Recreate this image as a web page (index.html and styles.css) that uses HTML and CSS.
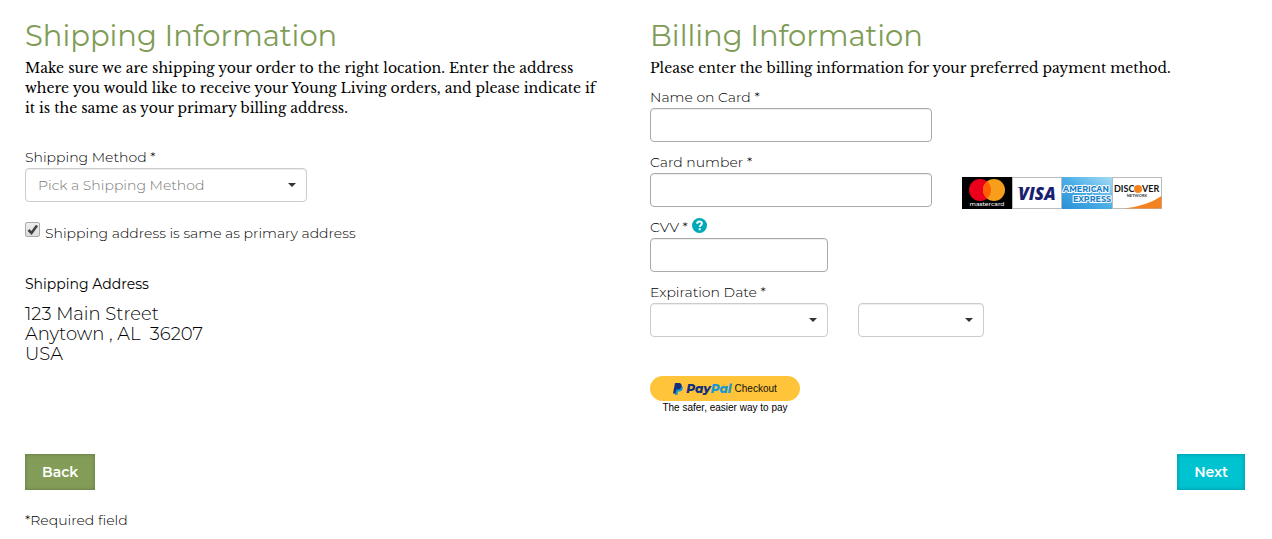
FILE: index.html
```html
<!DOCTYPE html>
<html lang="en">
<head>
    <meta charset="UTF-8">
    <meta name="viewport" content="width=device-width, initial-scale=1.0">
    <title>Shipping and Billing</title>
    <link rel="stylesheet" href="styles.css">
</head>
<body>
    <form class="checkout">
        <div class="columns">
            <section>
                <h1>Shipping Information</h1>
                <p class="intro">Make sure we are shipping your order to the right location. Enter the address where you would like to receive your Young Living orders, and please indicate if it is the same as your primary billing address.</p>

                <div class="field method">
                    <label for="shipping-method">Shipping Method *</label>
                    <select id="shipping-method" class="wide">
                        <option>Pick a Shipping Method</option>
                    </select>
                </div>

                <div class="same">
                    <input type="checkbox" id="same-address" checked>
                    <label for="same-address">Shipping address is same as primary address</label>
                </div>

                <h2>Shipping Address</h2>
                <address>
                    123 Main Street<br>
                    Anytown , AL &nbsp;36207<br>
                    USA
                </address>
            </section>

            <section>
                <h1>Billing Information</h1>
                <p class="intro">Please enter the billing information for your preferred payment method.</p>

                <div class="field">
                    <label for="card-name">Name on Card *</label>
                    <input type="text" id="card-name" class="wide">
                </div>

                <div class="field">
                    <label for="card-number">Card number *</label>
                    <div class="row">
                        <input type="text" id="card-number" class="wide">
                        <div class="cards">
                            <svg viewBox="0 0 50 32" role="img" aria-label="Mastercard">
                                <rect width="50" height="32" fill="#000"/>
                                <circle cx="18" cy="13" r="11" fill="#eb001b"/>
                                <circle cx="32" cy="13" r="11" fill="#f79e1b"/>
                                <path d="M25 4.500a11 11 0 0 1 0 17a11 11 0 0 1 0-17z" fill="#ff5f00"/>
                                <text x="25" y="29" class="mc-name">mastercard</text>
                            </svg>
                            <svg viewBox="0 0 50 32" role="img" aria-label="Visa">
                                <rect x=".5" y=".5" width="49" height="31" fill="#fff" stroke="#bbb"/>
                                <text x="25" y="23" class="visa-name">VISA</text>
                                <path d="M5 10h5l2 5q-2-4-7-5z" fill="#1a1f71"/>
                            </svg>
                            <svg viewBox="0 0 50 32" role="img" aria-label="American Express">
                                <defs>
                                    <linearGradient id="amex" x1="0" y1="1" x2="1" y2="0">
                                        <stop offset="0" stop-color="#2a8fd6"/>
                                        <stop offset=".5" stop-color="#4aaee6"/>
                                        <stop offset="1" stop-color="#a5dcf6"/>
                                    </linearGradient>
                                </defs>
                                <rect width="50" height="32" fill="url(#amex)"/>
                                <text x="1" y="15" class="amex-name">AMERICAN</text>
                                <text x="11" y="25" class="amex-name">EXPRESS</text>
                            </svg>
                            <svg viewBox="0 0 50 32" role="img" aria-label="Discover">
                                <rect x=".5" y=".5" width="49" height="31" fill="#fff" stroke="#bbb"/>
                                <path d="M12 31.500Q35 29 49.500 19V31.500z" fill="#f58220"/>
                                <text x="2" y="15" class="disc-name">DISC</text>
                                <circle cx="26" cy="12" r="4" fill="#f58220"/>
                                <text x="30" y="15" class="disc-name">VER</text>
                                <text x="25" y="20" class="disc-net">NETWORK</text>
                            </svg>
                        </div>
                    </div>
                </div>

                <div class="field">
                    <label for="cvv">CVV *
                        <svg class="help" viewBox="0 0 16 16" aria-hidden="true">
                            <circle cx="7.500" cy="6.500" r="7.500" fill="#00a9b7"/>
                            <path d="M5.200 4.700C5.200 1.800 9.900 1.800 9.900 4.600C9.900 6.200 7.700 6.200 7.700 7.900" fill="none" stroke="#fff" stroke-width="2"/>
                            <rect x="6.700" y="9.200" width="2" height="2" fill="#fff"/>
                        </svg>
                    </label>
                    <input type="text" id="cvv" class="medium">
                </div>

                <div class="field">
                    <label for="exp-month">Expiration Date *</label>
                    <div class="row">
                        <select id="exp-month" class="medium"><option></option></select>
                        <select id="exp-year" class="small" aria-label="Expiration year"><option></option></select>
                    </div>
                </div>

                <div class="paypal">
                    <button type="button" class="paypal-btn">
                        <svg class="pp-mark" viewBox="0 0 10 12" aria-hidden="true">
                            <path d="M3.500 3H8.500Q10.400 4 9.600 6.200Q8.900 8.500 6 8.500H5L4.400 12H1.800z" fill="#1797d4"/>
                            <path d="M2 0H6.500Q9.200.5 8.600 3.500Q8 6.500 4.800 6.500H3.300L2.500 10.500H0z" fill="#14307c"/>
                        </svg>
                        <span class="pp-name">Pay<span>Pal</span></span>
                        <span>Checkout</span>
                    </button>
                    <p>The safer, easier way to pay</p>
                </div>
            </section>
        </div>

        <div class="actions">
            <button type="button" class="btn back">Back</button>
            <button type="button" class="btn next">Next</button>
        </div>
        <p class="required">*Required field</p>
    </form>
</body>
</html>
```
FILE: styles.css
```css
* {
    box-sizing: border-box;
}
body {
    margin: 0;
    background-color: #fff;
    color: #000;
    font-family: Montserrat, Inter, sans-serif;
    font-size: 14px;
    font-weight: 300;
    line-height: 20px;
}
.checkout {
    padding: 18px 27px 8px 25px;
}
.columns {
    display: grid;
    grid-template-columns: 1fr 1fr;
    gap: 30px;
}
h1 {
    margin: 0 0 4px;
    color: #7f9c56;
    font-size: 29px;
    font-weight: 400;
    line-height: 36px;
}
.intro {
    margin: 0 0 9px;
    padding-right: 12px;
    font-family: "Libre Baskerville", "Liberation Serif", serif;
    font-size: 14px;
    font-weight: 400;
}
.field {
    margin-bottom: 10px;
}
.field > label {
    display: flex;
    align-items: center;
    gap: 4px;
    margin-bottom: 1px;
}
.method {
    margin: 29px 0 20px;
}
input[type="text"], select {
    display: block;
    height: 34px;
    padding: 6px 12px;
    border: 1px solid #aaa;
    border-radius: 4px;
    background-color: #fff;
    box-shadow: inset 0 1px 1px rgba(0, 0, 0, 0.075);
    font: inherit;
}
select {
    appearance: none;
    border-color: #ccc;
    color: #777;
    background-image: url("data:image/svg+xml,%3Csvg xmlns='http://www.w3.org/2000/svg' width='8' height='4'%3E%3Cpath d='M0 0h8L4 4z' fill='%23333'/%3E%3C/svg%3E");
    background-repeat: no-repeat;
    background-position: right 10px center;
}
.wide {
    width: 282px;
}
.medium {
    width: 178px;
}
.small {
    width: 126px;
}
.row {
    display: flex;
    gap: 30px;
}
.same {
    display: flex;
    gap: 5px;
}
.same input {
    appearance: none;
    width: 15px;
    height: 15px;
    margin: 0;
    border: 1px solid #aaa;
    border-radius: 2px;
    background: url("data:image/svg+xml,%3Csvg xmlns='http://www.w3.org/2000/svg' viewBox='0 0 13 13'%3E%3Cpath d='M2.500 7l3 3L11 2.500' fill='none' stroke='%23444' stroke-width='2.600'/%3E%3C/svg%3E"), linear-gradient(#eee, #ddd);
}
.same label {
    padding-top: 1px;
}
h2 {
    margin: 31px 0 10px;
    font-size: 14px;
    font-weight: 400;
    line-height: 20px;
}
address {
    font-size: 18px;
    font-style: normal;
}
.cards {
    display: flex;
    margin: 4px 0 -2px;
}
.cards svg {
    width: 50px;
    height: 32px;
}
.mc-name {
    fill: #fff;
    font: 500 6px Montserrat, Inter, sans-serif;
    text-anchor: middle;
}
.visa-name {
    fill: #1a1f71;
    font: italic 800 17px "Open Sans", sans-serif;
    text-anchor: middle;
}
.amex-name {
    fill: #1680c8;
    stroke: #fff;
    stroke-width: 2px;
    paint-order: stroke;
    font: 700 8px Montserrat, "Liberation Sans", sans-serif;
}
.disc-name {
    fill: #111;
    font: 700 9px Lato, sans-serif;
}
.disc-net {
    fill: #333;
    font: 700 4px Lato, sans-serif;
    text-anchor: middle;
}
.help {
    width: 16px;
    height: 16px;
    overflow: visible;
}
.paypal {
    width: 150px;
    margin-top: 39px;
    font-family: "Liberation Sans", Arial, sans-serif;
    font-size: 10px;
    font-weight: 400;
    text-align: center;
}
.paypal-btn {
    display: flex;
    align-items: center;
    justify-content: center;
    gap: 3px;
    width: 100%;
    height: 25px;
    padding: 0;
    border: none;
    border-radius: 13px;
    background-color: #ffc439;
    color: #111;
    font: inherit;
    cursor: pointer;
}
.pp-mark {
    width: 10px;
    height: 12px;
}
.pp-name {
    color: #14307c;
    font: italic 800 12px Montserrat, Lato, sans-serif;
}
.pp-name span {
    color: #1797d4;
}
.paypal p {
    margin: 0;
    line-height: 14px;
}
.actions {
    display: flex;
    justify-content: space-between;
    margin: 39px 0 20px;
}
.btn {
    height: 36px;
    padding: 0 17px;
    border: none;
    color: #fff;
    font-family: Montserrat, Inter, sans-serif;
    font-size: 14px;
    font-weight: 600;
    box-shadow: inset 0 0 4px rgba(0, 0, 0, 0.25);
    cursor: pointer;
}
.back {
    background-color: #839d58;
}
.next {
    background-color: #00c3d2;
}
.required {
    margin: 0;
}
```
